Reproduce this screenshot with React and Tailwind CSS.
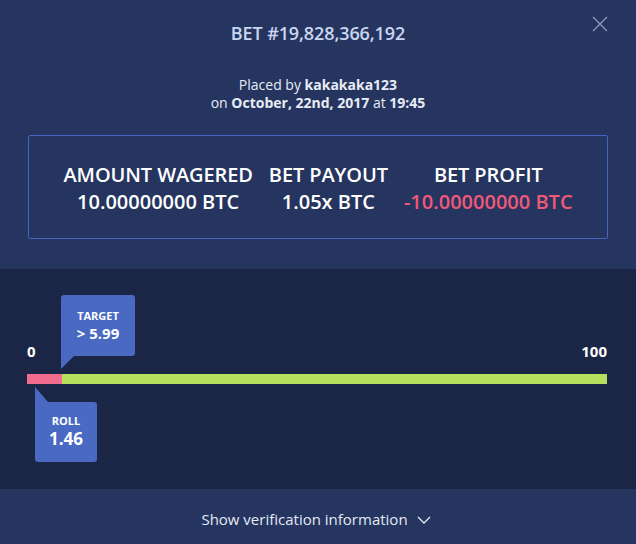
import React from "react";

export default function App() {
  return (
    <div className="w-[636px] h-[544px] flex flex-col bg-[#25355f] font-['Open_Sans',sans-serif] overflow-hidden">
      <div className="h-[269px] relative flex flex-col items-center">
        <button className="absolute left-[592px] top-[16px] w-[16px] h-[16px] flex items-center justify-center">
          <svg width="16" height="16" viewBox="0 0 16 16">
            <path d="M1 1 L15 15 M15 1 L1 15" stroke="#8e9cc2" strokeWidth="1.2" />
          </svg>
        </button>
        <div className="mt-[20px] text-[18px] leading-[26px] font-semibold text-[#cad5f1] tracking-[-0.1px]">
          BET #19,828,366,192
        </div>
        <div className="mt-[30px] text-[14px] leading-[18px] text-[#e8ecf6] text-center">
          <div>
            Placed by <span className="font-bold">kakakaka123</span>
          </div>
          <div>
            on <span className="font-bold">October, 22nd, 2017</span> at <span className="font-bold">19:45</span>
          </div>
        </div>
        <div className="mt-[23px] w-[580px] h-[104px] border border-[#4564c0] rounded-[2px] flex items-center justify-center gap-[16px] pt-[1px]">
          <div className="flex flex-col items-center">
            <div className="text-[20px] leading-[27px] font-semibold text-white tracking-[-0.1px]">AMOUNT WAGERED</div>
            <div className="text-[20px] leading-[27px] font-semibold text-white">10.00000000 BTC</div>
          </div>
          <div className="flex flex-col items-center">
            <div className="text-[20px] leading-[27px] font-semibold text-white tracking-[-0.1px]">BET PAYOUT</div>
            <div className="text-[20px] leading-[27px] font-semibold text-white">1.05x BTC</div>
          </div>
          <div className="flex flex-col items-center">
            <div className="text-[20px] leading-[27px] font-semibold text-white tracking-[-0.1px]">BET PROFIT</div>
            <div className="text-[20px] leading-[27px] font-semibold text-[#f0587a]">-10.00000000 BTC</div>
          </div>
        </div>
      </div>
      <div className="h-[220px] bg-[#1b2545] pl-[27px] pr-[29px] pt-[72px]">
        <div className="flex justify-between h-[20px] text-[15px] leading-[20px] font-bold text-white">
          <span>0</span>
          <span>100</span>
        </div>
        <div className="relative mt-[13px] h-[10px] flex">
          <div className="w-[35px] h-full bg-[#f26d8d]" />
          <div className="flex-1 h-full bg-[#b5e05e]" />
          <div className="absolute left-[34px] top-[-79px] w-[74px] h-[61px] bg-[#4a69c3] rounded-[3px] rounded-bl-none flex flex-col items-center justify-center text-white">
            <div className="text-[11px] leading-[14px] font-bold">TARGET</div>
            <div className="text-[15px] leading-[20px] font-bold">&gt; 5.99</div>
            <svg className="absolute left-0 top-full" width="13" height="13" viewBox="0 0 13 13">
              <polygon points="0,0 13,0 0,13" fill="#4a69c3" />
            </svg>
          </div>
          <div className="absolute left-[8px] top-[28px] w-[62px] h-[60px] bg-[#4a69c3] rounded-[3px] rounded-tl-none flex flex-col items-center justify-center text-white">
            <div className="text-[11px] leading-[14px] font-bold">ROLL</div>
            <div className="text-[17px] leading-[22px] font-bold">1.46</div>
            <svg className="absolute left-0 bottom-full" width="13" height="15" viewBox="0 0 13 15">
              <polygon points="0,0 0,15 13,15" fill="#4a69c3" />
            </svg>
          </div>
        </div>
      </div>
      <div className="flex-1 flex items-center justify-center gap-[9px] text-[15px] text-[#e4e9f6] pt-[6px] pr-[4px]">
        <span>Show verification information</span>
        <svg width="14" height="8" viewBox="0 0 14 8">
          <path d="M1 1 L7 7 L13 1" stroke="#e4e9f6" strokeWidth="1.3" fill="none" />
        </svg>
      </div>
    </div>
  );
}
